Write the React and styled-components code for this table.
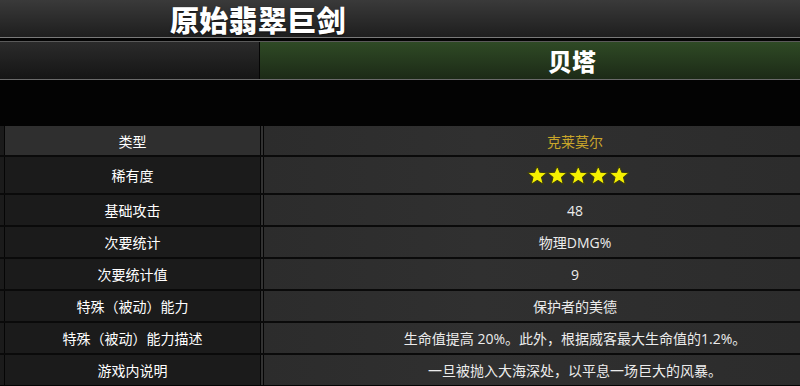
import React from "react";
import styled, { createGlobalStyle } from "styled-components";

const Global = createGlobalStyle`
  html, body { margin: 0; padding: 0; background: #030303; overflow: hidden; }
  body { font-family: "Noto Sans CJK SC", sans-serif; }
`;

const Page = styled.div`
  width: 800px;
  background: #030303;
  display: flex;
  flex-direction: column;
`;

const Header = styled.div`
  height: 37px;
  background: linear-gradient(#3a3a3a, #1e1e1e);
  display: flex;
  align-items: center;
  padding-left: 170px;
`;

const Title = styled.h1`
  margin: 0;
  font-family: "Noto Sans CJK SC", sans-serif;
  font-weight: 900;
  font-size: 29px;
  line-height: 36px;
  color: #fff;
  letter-spacing: 0.3px;
  text-shadow: 0 1px 2px rgba(0,0,0,0.6);
`;

const Rule = styled.div`
  height: 1px;
  background: ${p => p.$c};
`;

const Gap = styled.div`
  height: ${p => p.$h}px;
  background: #030303;
`;

const Band = styled.div`
  height: 37px;
  display: grid;
  grid-template-columns: 259px 1px 1fr;
`;

const BandLeft = styled.div`
  background: linear-gradient(#2b2b2b, #151515);
`;

const BandSep = styled.div`
  background: #050505;
`;

const BandRight = styled.div`
  background: linear-gradient(#2f4a25, #1c2a17);
  display: flex;
  align-items: center;
  justify-content: center;
  padding-left: 84px;
`;

const SubTitle = styled.h2`
  margin: 0;
  font-family: "Noto Sans CJK SC", sans-serif;
  font-weight: 900;
  font-size: 24px;
  line-height: 30px;
  color: #fff;
`;

const Table = styled.div`
  display: grid;
  grid-template-columns: 5px 255px 4px 1fr;
  row-gap: 2px;
  background: #0a0a0a;
`;

const Edge = styled.div`
  background: #1b1b1b;
  border-right: 1px solid #050505;
  height: ${p => p.$h}px;
`;

const Split = styled.div`
  background: #333;
  border-left: 1px solid #050505;
  border-right: 1px solid #050505;
`;

const Label = styled.div`
  height: ${p => p.$h}px;
  background: ${p => (p.$first ? "#2f2f2f" : "#1b1b1b")};
  display: flex;
  align-items: center;
  justify-content: center;
  color: #fff;
  font-size: 14px;
  font-family: "Noto Sans CJK SC", sans-serif;
`;

const Value = styled.div`
  height: ${p => p.$h}px;
  background: linear-gradient(90deg, #2c2c2c, #303030 40%, #2c2c2c);
  display: flex;
  align-items: center;
  justify-content: center;
  padding-left: 86px;
  white-space: nowrap;
  color: ${p => (p.$gold ? "#c9a52a" : "#ececec")};
  font-size: 14px;
  font-family: "Open Sans", "Noto Sans CJK SC", sans-serif;
`;

const Stars = styled.div`
  display: flex;
  padding-left: 6px;
`;

const Star = () => (
  <svg width="20.5" height="20" viewBox="0 0 24 23">
    <polygon
      points="12,0.8 15.1,8.4 23.3,8.9 17,14.3 19.1,22.4 12,17.9 4.9,22.4 7,14.3 0.7,8.9 8.9,8.4"
      fill="#f5f000"
      stroke="#3a3a10"
      strokeWidth="1.2"
      strokeLinejoin="round"
    />
  </svg>
);

const rows = [
  { label: "类型", value: "克莱莫尔", gold: true, h: 29, first: true },
  { label: "稀有度", stars: 5, h: 36 },
  { label: "基础攻击", value: "48", h: 30 },
  { label: "次要统计", value: "物理DMG%", h: 30 },
  { label: "次要统计值", value: "9", h: 30 },
  { label: "特殊（被动）能力", value: "保护者的美德", h: 30 },
  { label: "特殊（被动）能力描述", value: "生命值提高 20%。此外，根据威客最大生命值的1.2%。", h: 30 },
  { label: "游戏内说明", value: "一旦被抛入大海深处，以平息一场巨大的风暴。", h: 30 },
];

export default function App() {
  return (
    <>
      <Global />
      <Page>
        <Header>
          <Title>原始翡翠巨剑</Title>
        </Header>
        <Rule $c="#7a7a7a" />
        <Gap $h={3} />
        <Rule $c="#5a5a5a" />
        <Band>
          <BandLeft />
          <BandSep />
          <BandRight>
            <SubTitle>贝塔</SubTitle>
          </BandRight>
        </Band>
        <Rule $c="#6a6a6a" />
        <Gap $h={46} />
        <Table>
          {rows.map((r, i) => (
            <React.Fragment key={i}>
              <Edge $h={r.h} />
              <Label $h={r.h} $first={r.first}>{r.label}</Label>
              <Split />
              <Value $h={r.h} $gold={r.gold}>
                {r.stars ? (
                  <Stars>
                    {Array.from({ length: r.stars }).map((_, k) => (
                      <Star key={k} />
                    ))}
                  </Stars>
                ) : (
                  r.value
                )}
              </Value>
            </React.Fragment>
          ))}
        </Table>
      </Page>
    </>
  );
}
